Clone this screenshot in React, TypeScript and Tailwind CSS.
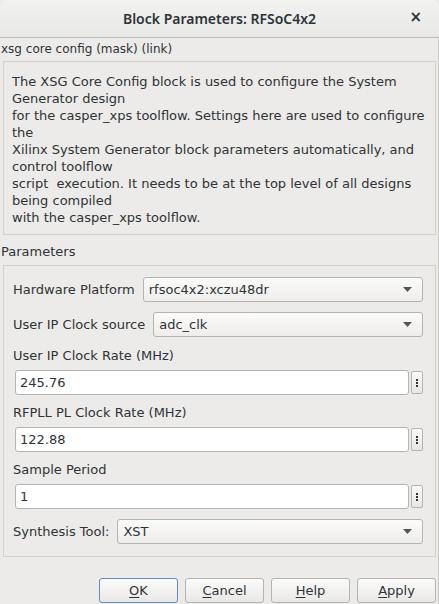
import React from 'react'

const FONT = "font-['DejaVu_Sans',sans-serif]"

const descLines = [
  'The XSG Core Config block is used to configure the System',
  'Generator design',
  'for the casper_xps toolflow. Settings here are used to configure',
  'the',
  'Xilinx System Generator block parameters automatically, and',
  'control toolflow',
  'script\u00a0 execution. It needs to be at the top level of all designs',
  'being compiled',
  'with the casper_xps toolflow.',
]

function Arrow() {
  return (
    <svg width="9" height="5" viewBox="0 0 9 5" className="shrink-0">
      <path d="M0 0 L9 0 L4.5 5 Z" fill="#555753" />
    </svg>
  )
}

function Combo({ value, className }: { value: string; className?: string }) {
  return (
    <div
      className={`flex h-[25px] items-center justify-between rounded-[3px] border border-[#b4b4b1] bg-gradient-to-b from-[#fbfbfa] to-[#eeedec] pl-[5px] pr-[10px] ${className ?? ''}`}
    >
      <span>{value}</span>
      <Arrow />
    </div>
  )
}

function EditRow({ value }: { value: string }) {
  return (
    <div className="ml-[2px] flex items-center gap-[2px]">
      <div className="flex h-[25px] flex-1 items-center rounded-[3px] border border-[#b4b4b1] bg-white pl-[4px]">
        {value}
      </div>
      <button className="flex h-[23px] w-[12px] flex-col items-center justify-center gap-[1px] rounded-[2px] border border-[#b4b4b1] bg-gradient-to-b from-[#fafaf9] to-[#e8e7e6]">
        <span className="h-[2px] w-[2px] bg-[#2e3436]" />
        <span className="h-[2px] w-[2px] bg-[#2e3436]" />
        <span className="h-[2px] w-[2px] bg-[#2e3436]" />
      </button>
    </div>
  )
}

function DlgButton({ u, rest, focused }: { u: string; rest: string; focused?: boolean }) {
  return (
    <button
      className={`flex h-[25px] w-[79px] items-center justify-center rounded-[3px] border bg-gradient-to-b from-[#fbfbfa] to-[#e9e8e7] text-[13px] ${
        focused ? 'border-[#5f8ebf]' : 'border-[#b4b4b1]'
      }`}
    >
      <span className="underline decoration-1 underline-offset-2">{u}</span>
      {rest}
    </button>
  )
}

export default function App() {
  return (
    <div className={`${FONT} flex h-[604px] w-[439px] flex-col overflow-hidden bg-[#edebe9] text-[13px] text-[#2e3436]`}>
      {/* Title bar */}
      <div className="relative flex h-[38px] shrink-0 items-center justify-center rounded-t-[7px] border-b border-[#bdbcba] bg-gradient-to-b from-[#f2f2f1] to-[#e8e8e7]">
        <span className="font-['Noto_Sans',sans-serif] text-[14px] font-semibold text-[#2e3436]">
          Block Parameters: RFSoC4x2
        </span>
        <span className="absolute right-[17px] top-[10px] text-[15px] font-bold leading-none">×</span>
      </div>

      <div className="flex flex-1 flex-col border-r border-[#c9c7c4]">
        <div className="pl-[1px] pt-[3px] text-[12px] leading-[17px]">xsg core config (mask) (link)</div>

        <div className="ml-[3px] mr-[2px] mt-[3px] h-[174px] border border-[#d3cfcb] px-[8px] pt-[11px] leading-[17px]">
          {descLines.map((l, i) => (
            <div key={i} className="whitespace-pre">
              {l}
            </div>
          ))}
        </div>

        <div className="pl-[1px] pt-[8px] leading-[17px]">Parameters</div>

        <div className="ml-[3px] mr-[2px] mt-[5px] flex h-[292px] flex-col border border-[#d3cfcb] pl-[9px] pr-[12px] pt-[11px]">
          <div className="flex items-center gap-[8px]">
            <span>Hardware Platform</span>
            <Combo value="rfsoc4x2:xczu48dr" className="flex-1" />
          </div>
          <div className="mt-[10px] flex items-center gap-[8px]">
            <span>User IP Clock source</span>
            <Combo value="adc_clk" className="flex-1" />
          </div>

          <div className="mt-[10px] leading-[17px]">User IP Clock Rate (MHz)</div>
          <div className="mt-[6px]">
            <EditRow value="245.76" />
          </div>

          <div className="mt-[9px] leading-[17px]">RFPLL PL Clock Rate (MHz)</div>
          <div className="mt-[6px]">
            <EditRow value="122.88" />
          </div>

          <div className="mt-[9px] leading-[17px]">Sample Period</div>
          <div className="mt-[6px]">
            <EditRow value="1" />
          </div>

          <div className="mt-[10px] flex items-center gap-[8px]">
            <span>Synthesis Tool:</span>
            <Combo value="XST" className="flex-1" />
          </div>
        </div>

        <div className="mr-[2px] mt-[21px] flex justify-end gap-[7px]">
          <DlgButton u="O" rest="K" focused />
          <DlgButton u="C" rest="ancel" />
          <DlgButton u="H" rest="elp" />
          <DlgButton u="A" rest="pply" />
        </div>
      </div>
    </div>
  )
}
